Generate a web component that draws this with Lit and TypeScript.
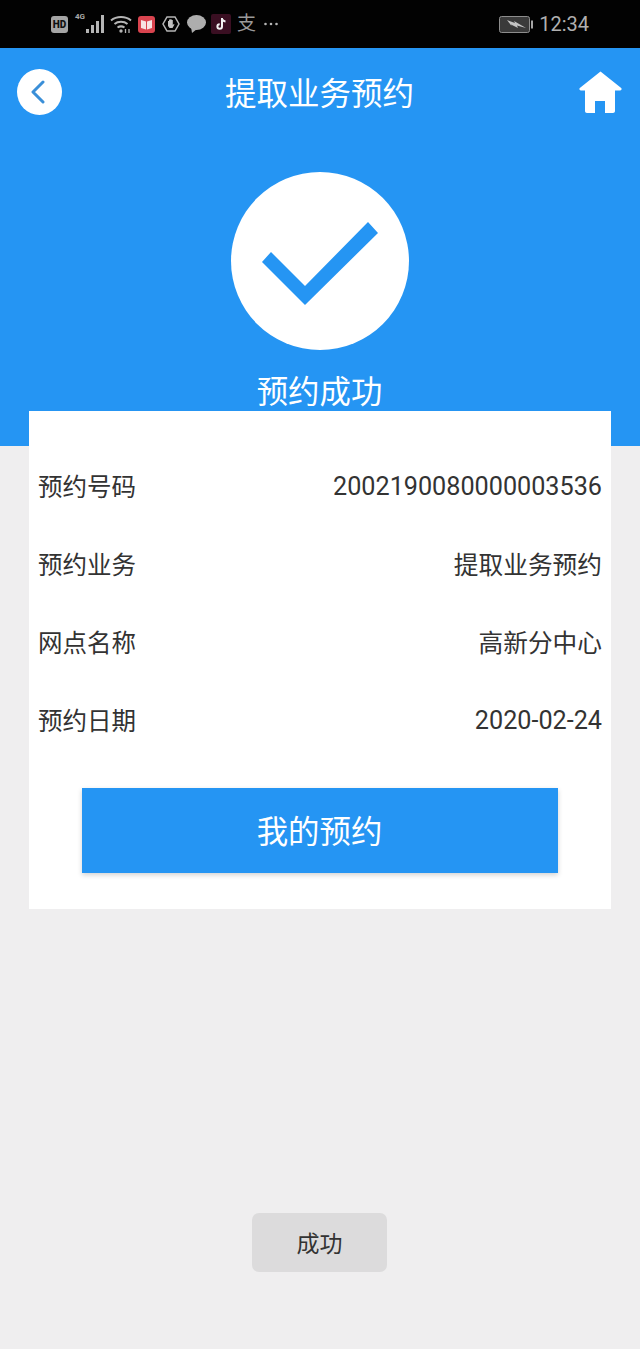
import { LitElement, css, html } from 'lit';
import { customElement } from 'lit/decorators.js';

const rows = [
  ['预约号码', '2002190080000003536'],
  ['预约业务', '提取业务预约'],
  ['网点名称', '高新分中心'],
  ['预约日期', '2020-02-24'],
];

@customElement('app-root')
export class AppRoot extends LitElement {
  static styles = css`
    :host {
      display: block;
      position: relative;
      height: 1349px;
      overflow: hidden;
      background: #efeeef;
      font-family: Roboto, 'Noto Sans CJK SC', sans-serif;
      color: #333;
    }

    .status {
      display: flex;
      align-items: center;
      height: 48px;
      padding: 0 51px;
      box-sizing: border-box;
      background: #020202;
      color: #a9a9a9;
    }

    .status svg {
      display: block;
      flex: none;
    }

    .hd {
      flex: none;
      width: 17px;
      height: 17px;
      margin-right: 7px;
      border-radius: 3px;
      background: #a5a5a5;
      color: #111;
      font-size: 10px;
      font-weight: 900;
      line-height: 17px;
      text-align: center;
    }

    .net {
      display: flex;
      align-items: flex-end;
      flex: none;
      margin-right: 5px;
    }

    .net span {
      align-self: flex-start;
      width: 11px;
      margin-top: -3px;
      font-size: 8px;
      font-weight: 700;
    }

    .wifi {
      margin-right: 6px;
    }

    .book {
      margin-right: 7px;
    }

    .hand {
      margin-right: 7px;
    }

    .chat {
      margin-right: 5px;
    }

    .tiktok {
      margin-right: 6px;
    }

    .ali {
      flex: none;
      width: 19px;
      margin-right: 8px;
      color: #9a9a9a;
      font-size: 19px;
      line-height: 20px;
    }

    .dots {
      margin-right: auto;
    }

    .battery {
      margin-right: 6px;
    }

    .time {
      font-size: 20px;
      color: #b0b0b0;
    }

    .hero {
      height: 398px;
      box-sizing: border-box;
      padding-top: 21px;
      padding-right: 1px;
      background: #2595f3;
      color: #fff;
      text-align: center;
    }

    .nav {
      display: flex;
      align-items: center;
      justify-content: space-between;
      height: 46px;
      padding: 0 17px;
    }

    .nav h1 {
      margin: 5px 2px 0 0;
      font-size: 31.5px;
      font-weight: 400;
      line-height: 40px;
    }

    .back {
      display: flex;
      align-items: center;
      justify-content: center;
      width: 45px;
      height: 46px;
      padding-right: 3px;
      box-sizing: border-box;
      border-radius: 50%;
      background: #fff;
    }

    .home {
      margin-top: 1px;
    }

    .check {
      display: block;
      margin: 57px auto 0;
    }

    .done {
      margin-top: 22px;
      font-size: 31.4px;
      line-height: 42px;
    }

    .card {
      position: relative;
      margin: -35px 29px 0;
      height: 498px;
      box-sizing: border-box;
      padding: 37px 9px 0;
      background: #fff;
    }

    .row {
      display: flex;
      align-items: center;
      justify-content: space-between;
      height: 78px;
      padding-bottom: 4px;
      box-sizing: border-box;
      font-size: 24.5px;
      color: #333;
    }

    .row b {
      font-weight: 400;
      font-size: 24.7px;
    }

    .row b.num {
      padding-top: 3px;
      font-size: 25.2px;
    }

    .primary {
      display: flex;
      align-items: center;
      justify-content: center;
      height: 85px;
      margin: 28px 44px 0;
      padding: 0 1px 3px 0;
      box-sizing: border-box;
      background: #2595f3;
      color: #fff;
      font-size: 31.4px;
      box-shadow: 0 2px 5px rgba(0, 0, 0, 0.18);
    }

    .toast {
      position: absolute;
      left: 252px;
      top: 1213px;
      display: flex;
      align-items: center;
      justify-content: center;
      width: 135px;
      height: 59px;
      padding-bottom: 2px;
      box-sizing: border-box;
      border-radius: 7px;
      background: #dcdbdc;
      color: #333;
      font-size: 23px;
    }
  `;

  render() {
    return html`
      <div class="status">
        <div class="hd">HD</div>
        <div class="net">
          <span>4G</span>
          <svg width="19" height="18" viewBox="0 0 19 18" fill="#b5b5b5">
            <rect x="0" y="14" width="3" height="4" />
            <rect x="5" y="10" width="3" height="8" />
            <rect x="10" y="6" width="3" height="12" />
            <rect x="15" y="0" width="3" height="18" />
          </svg>
        </div>
        <svg class="wifi" width="22" height="19" viewBox="0 0 22 19" fill="none" stroke="#b5b5b5" stroke-width="2">
          <path d="M1 5.500C6.500 .8 15.500 .8 21 5.500" />
          <path d="M4.500 9C8 6 14 6 17.500 9" />
          <path d="M7.500 12.500c2-1.300 5-1.300 7 0" />
          <circle cx="11" cy="16" r="1.700" fill="#b5b5b5" stroke="none" />
          <path d="M15.500 14v4M19 14v4" stroke-width="1.300" />
        </svg>
        <svg class="book" width="17" height="17" viewBox="0 0 17 17">
          <rect width="17" height="17" rx="3" fill="#d9444f" />
          <path d="M3 4 8 5.500v8l-5-1.500zM14 4 9 5.500v8l5-1.500z" fill="#f7e3e3" />
        </svg>
        <svg class="hand" width="18" height="16" viewBox="0 0 18 16">
          <path d="M5 1h8l4 7-4 7H5L1 8z" fill="none" stroke="#b5b5b5" stroke-width="1.500" />
          <path d="M6 7.500V5h1v2.500V3.500h1.300v4V3.200h1.300v4.300V4h1.200v5l1-1 .7.500-2 3.500H7.500L6 10z" fill="#c0c0c0" />
        </svg>
        <svg class="chat" width="19" height="18" viewBox="0 0 19 18" fill="#adadad">
          <ellipse cx="9.500" cy="7.500" rx="9.500" ry="7.500" />
          <path d="M4 12l1 6 5-4z" />
        </svg>
        <svg class="tiktok" width="20" height="20" viewBox="0 0 20 20">
          <rect width="20" height="20" rx="2" fill="#3a0f22" />
          <path d="M11 4v8.500a2.300 2.300 0 1 1-2.300-2.300M11 4c.2 2 1.500 3.300 3.500 3.500" fill="none" stroke="#f2f2f2" stroke-width="2" />
        </svg>
        <span class="ali">支</span>
        <svg class="dots" width="14" height="4" viewBox="0 0 14 4" fill="#b5b5b5">
          <circle cx="1.500" cy="2" r="1.300" />
          <circle cx="7" cy="2" r="1.300" />
          <circle cx="12.500" cy="2" r="1.300" />
        </svg>
        <svg class="battery" width="34" height="17" viewBox="0 0 34 17">
          <rect x="0.500" y="0.500" width="30" height="16" rx="2" fill="#3a3a3a" stroke="#8d8d8d" />
          <rect x="32" y="4.500" width="2" height="8" fill="#a5a5a5" />
          <path d="M8 4 16 7 15 5 27 12 18 9.500 19 12 12 8.500 12.500 10z" fill="#c4c4c4" />
        </svg>
        <span class="time">12:34</span>
      </div>

      <div class="hero">
        <div class="nav">
          <div class="back">
            <svg width="14" height="24" viewBox="0 0 14 24" fill="none" stroke="#3a8fd8" stroke-width="3" stroke-linecap="round" stroke-linejoin="round">
              <path d="M12 2 2 12l10 10" />
            </svg>
          </div>
          <h1>提取业务预约</h1>
          <svg class="home" width="43" height="43" viewBox="0 0 43 43" fill="#fff">
            <path d="M21.500 .5.800 17c-1 1.200 0 2.500 1 2.500H6V40c0 1.200.8 2 2 2h8V30h10v12h8c1.200 0 2-.8 2-2V19.500h5.200c1 0 2-1.300 1-2.500z" />
          </svg>
        </div>
        <svg class="check" width="178" height="178" viewBox="0 0 178 178">
          <circle cx="89" cy="89" r="89" fill="#fff" />
          <path d="M31 90 40 80 74 114 137 50 147 61 74 133z" fill="#2595f3" />
        </svg>
        <div class="done">预约成功</div>
      </div>

      <div class="card">
        ${rows.map(
          ([label, value]) => html`
            <div class="row">
              <span>${label}</span>
              <b class=${/^[\d-]+$/.test(value) ? 'num' : ''}>${value}</b>
            </div>
          `,
        )}
        <div class="primary">我的预约</div>
      </div>

      <div class="toast">成功</div>
    `;
  }
}
